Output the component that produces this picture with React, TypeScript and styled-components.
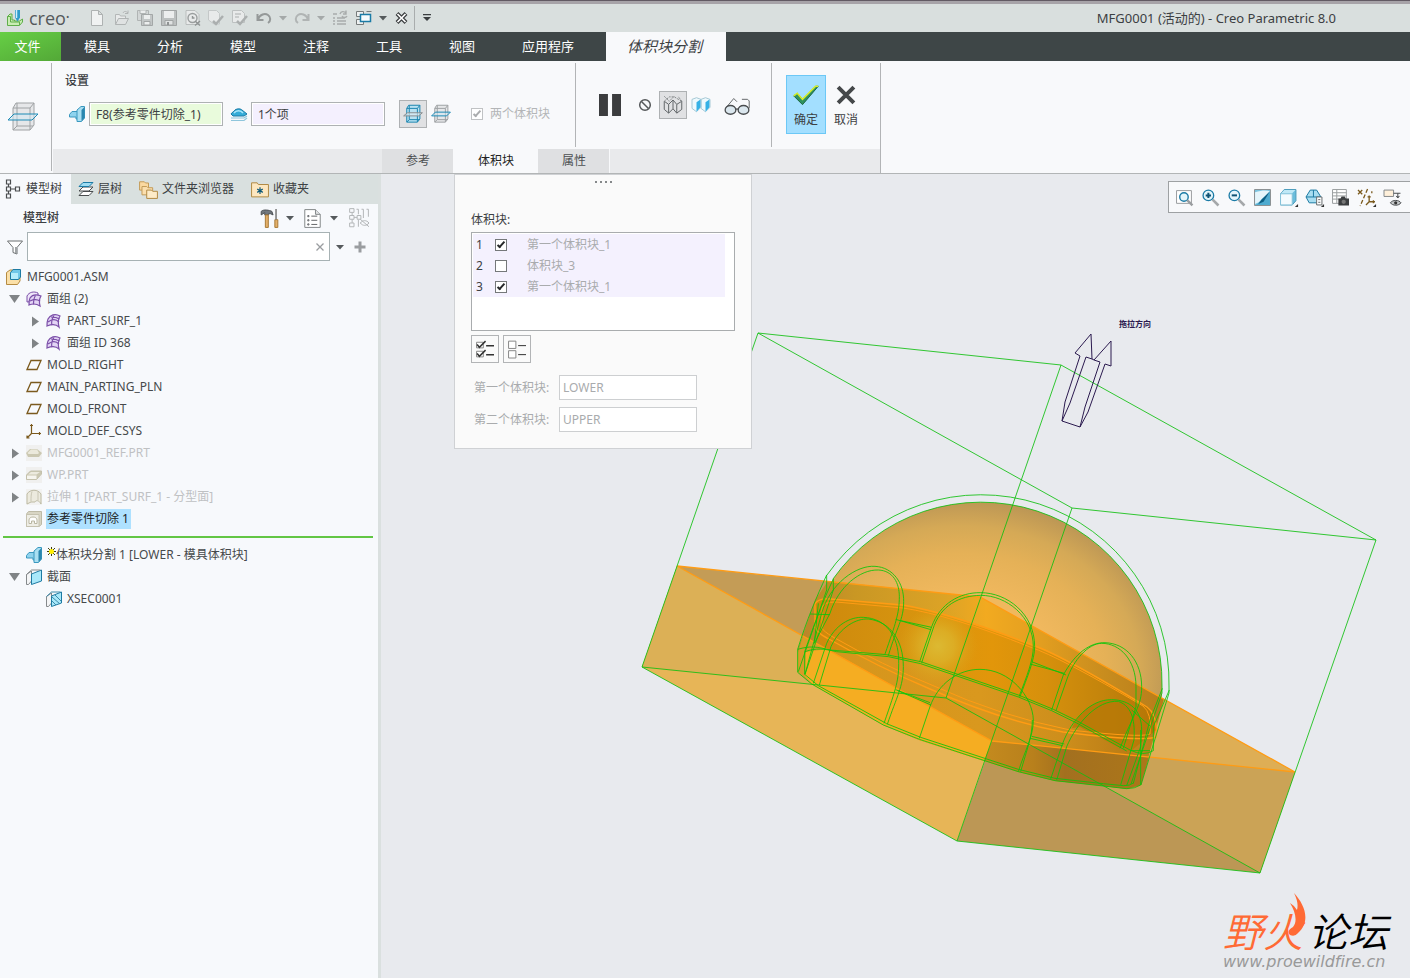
import React from "react";
import styled, { createGlobalStyle, css } from "styled-components";

const GlobalStyle = createGlobalStyle`
  *, *::before, *::after { box-sizing: border-box; }
  body {
    margin: 0;
    background: #e8eaee;
    color: #3c4043;
    font: 12px/18px "Noto Sans", "Noto Sans CJK SC", sans-serif;
  }
  button, input { font: inherit; color: inherit; }
  button { padding: 0; border: 0; background: none; }
  svg { display: block; flex: none; }
`;

/* ---------- icons ---------- */

const C = { blue: "#1b7ba6", brown: "#7b5a1d", purple: "#7b4fa8" };

const icons: Record<string, React.ReactNode> = {
  logo: (
    <>
      <path d="M.500 6.500L3 4h2v6h2.500v1h5l3-2v3l-3 3.500H.500z" fill="#c9edb4" stroke="#5fae4a" />
      <path d="M.500 6.500h3V12h9M12.500 12v3" fill="none" stroke="#5fae4a" />
      <path d="M8 0v7.500l2.500 4L13 7.500V0z" fill="#2f9ccb" />
      <path d="M9.500 0v8" stroke="#d2eefa" strokeWidth="1.500" />
    </>
  ),
  file: <path d="M2.500.500h7l4 4v11h-11zM9.500.500v4h4" fill="#f0f2f2" stroke="#aeb2b2" />,
  open: (
    <>
      <path d="M1.500 14.500V4.500h4l1 1.500h5v2.500" fill="#e8eaea" stroke="#b3b7b7" />
      <path d="M1.500 14.500l3-6h10l-3 6zM9 3c1-2 3-2 5 0M14 .500V3.500h-3" fill="#dfe2e2" stroke="#b0b4b4" />
    </>
  ),
  saveCopy: (
    <>
      <path d="M.500.500h11v10h-11z" fill="#d3d7d7" stroke="#b0b4b4" />
      <path d="M3 .500v3h6v-3" fill="#eceeee" stroke="#b0b4b4" />
      <path d="M4.500 4.500h11v11h-11z" fill="#c3c7c7" stroke="#a3a7a7" />
      <path d="M7 5h6v4H7z" fill="#eceeee" />
      <path d="M7 11.500h6V15H7z" fill="#eceeee" stroke="#a3a7a7" />
    </>
  ),
  save: (
    <>
      <path d="M.500.500h15v15H.500z" fill="#bcc0c0" stroke="#a1a5a5" />
      <path d="M3 1h10v7H3z" fill="#eceeee" />
      <path d="M4 10.500h8V15H4z" fill="#dfe2e2" stroke="#a1a5a5" />
      <path d="M6 12h2v3H6z" fill="#8f9393" />
    </>
  ),
  searchX: (
    <>
      <path d="M1 .500h9l4 4v10H1z" fill="#e8eaea" stroke="#b9bdbd" />
      <circle cx="7.500" cy="8" r="4.500" fill="none" stroke="#9a9e9e" strokeWidth="1.400" />
      <path d="M7.500 6v2h2M10 11l5 4.500M15 11l-5 4.500" stroke="#8f9393" strokeWidth="1.400" fill="none" />
    </>
  ),
  docEdit: (
    <>
      <path d="M.500.500h8l3 3V14H6L.500 10z" fill="#e8eaea" stroke="#c4c8c8" />
      <path d="M5 11l3 3 7-8" fill="none" stroke="#abafaf" strokeWidth="2.500" />
    </>
  ),
  docPen: (
    <>
      <path d="M.500.500h9l3 3v9h-12z" fill="#e8eaea" stroke="#bdc1c1" />
      <path d="M3 4h6M3 7h4" fill="none" stroke="#aaaeae" />
      <path d="M5 11l3 3 7-8" fill="none" stroke="#abafaf" strokeWidth="2.500" />
    </>
  ),
  undo: <path d="M1.500 4v6h6M2 9.500C4 4 9 3 12 5c3 2 3 6 0 8" fill="none" stroke="#959999" strokeWidth="2" />,
  redo: <path d="M14.500 4v6h-6M14 9.500C12 4 7 3 4 5c-3 2-3 6 0 8" fill="none" stroke="#b0b4b4" strokeWidth="2" />,
  regen: (
    <path d="M1 4h4M1 8h2M5 8h8M1 11h2M5 11h9M1 14h2M5 14h9M8 4c1-3 4-3 6-1M14 .500V4h-3M15 6c-1 2-4 2-5 0" fill="none" stroke="#a8acac" strokeWidth="1.400" />
  ),
  windows: (
    <>
      <path d="M.500 1.500h7v5h-7zM.500 9.500h7v5h-7zM10.500 1.500h5" fill="#eef0f0" stroke="#777b7b" />
      <path d="M4.500 4.500h10v7h-10z" fill="#f6fbfd" stroke="#1b7ba6" strokeWidth="1.500" />
    </>
  ),
  closeWin: (
    <>
      <path d="M3 3.500l9 9M12 3.500l-9 9" stroke="#3b3e40" strokeWidth="4" />
      <path d="M3.500 4l8 8M11.500 4l-8 8" stroke="#fff" strokeWidth="1.700" />
    </>
  ),
  caret: <path d="M4 6h8l-4 4.500z" fill="#555a5c" />,
  caretDim: <path d="M4 6h8l-4 4.500z" fill="#a5a9a9" />,
  more: <path d="M4 4h8v1.200H4zM4 7h8l-4 4z" fill="#3b3e40" />,
  split: (
    <>
      <path d="M4.500 1H13.500V12L11.500 14.500H3V3.500z" fill="#e6e7e9" stroke="#9fa2a4" />
      <path d="M3 3.500H11.500v11M11.500 3.500L13.500 1M5 1V12.500L3 14.500M5 12.500h8" fill="none" stroke="#9fa2a4" />
      <path d="M.500 9.500L3.500 6.500h12l-3 3z" fill="#cfe8f3" fillOpacity=".5" stroke="#1d8ab5" />
    </>
  ),
  splitBlue: (
    <>
      <path d="M4.500 1H13.500V12L11.500 14.500H3V3.500z" fill="#b9e2f2" stroke="#1d86b0" />
      <path d="M3 3.500H11.500v11M11.500 3.500L13.500 1M5 1V12.500L3 14.500M5 12.500h8" fill="none" stroke="#1d86b0" />
      <path d="M.500 9.500L3.500 7h12l-3 2.500z" fill="#e2eef3" fillOpacity=".6" stroke="#8a8e90" />
    </>
  ),
  volume: (
    <>
      <path d="M.500 8.500L3 5.500h6v7.500H7v-2H.500z" fill="#8fd3ee" stroke="#3b98bf" />
      <path d="M8 4L12 .500h3.500V12l-3 3.500H8z" fill="#a9dff2" stroke="#3b98bf" />
      <path d="M12.500 4L15.500 1v11l-3 3z" fill="#2a86ae" />
    </>
  ),
  surfaceBlue: (
    <>
      <path d="M0 8c1-2 3-2 4-4 3-2 6-1 7 0l5 4-3 2H2z" fill="#35acd8" stroke="#1b7ba6" />
      <path d="M3 7c2-3 7-3 9 0" stroke="#a9e6fa" strokeWidth="1.500" fill="none" />
      <path d="M0 12h13l3-2M0 14.500h13l3-2.500" fill="none" stroke="#8fc6dc" strokeWidth="1.200" />
    </>
  ),
  none: (
    <>
      <circle cx="8" cy="8" r="5.300" fill="none" stroke="#55585a" strokeWidth="1.500" />
      <path d="M4.500 4.500l7 7" stroke="#55585a" strokeWidth="1.500" />
    </>
  ),
  wire: (
    <>
      <path d="M1 5l3.500 2.500v7L1 11.500zM4.500 7.500L8 4v7l-3.500 3.500M8 4l3 3.500v7L8 11M11 7.500L15 5v6.500l-4 3" fill="none" stroke="#63676a" />
      <path d="M1 5l4-3.500h4L15 5M15 5l-3-4M1 1l4 4 4-4" fill="none" stroke="#85898b" strokeDasharray="2 1" />
    </>
  ),
  shaded: (
    <>
      <path d="M0 3l4-1.500L8 3v7l-4 4-4-3zM8 3l4-1.500L16 3v7l-4 4-4-3z" fill="#eef9fd" stroke="#a5c9d6" />
      <path d="M4 5.500L7.500 3v7L4 14zM12 5.500L15.500 3v7L12 14z" fill="#35b1e6" />
    </>
  ),
  glasses: (
    <>
      <path d="M1 10l5-6 2 2M11 4.500h3.500l1 1V10" fill="none" stroke="#666a6c" />
      <ellipse cx="4" cy="11" rx="3.300" ry="2.700" fill="#dbe7ee" stroke="#4a4d4f" strokeWidth="1.300" />
      <ellipse cx="12" cy="11" rx="3.300" ry="2.700" fill="#dbe7ee" stroke="#4a4d4f" strokeWidth="1.300" />
      <path d="M7 10.500h2" fill="none" stroke="#4a4d4f" strokeWidth="1.300" />
    </>
  ),
  check: (
    <>
      <path d="M1 8.500l2-1.500 3 3.500L13.500 3H15L6 13.500z" fill="#2e9160" stroke="#1f6a43" />
      <path d="M1 8.500l2-1.500 3 3.500L13.500 3H15" fill="none" stroke="#d8ee26" strokeWidth="1.500" />
    </>
  ),
  cancel: <path d="M3.500 3.500l9 9M12.500 3.500L3.500 12.500" stroke="#45484a" strokeWidth="4" />,
  pause: <path d="M0 0h6.500v16H0zM9.500 0H16v16H9.500z" fill="#3b3c3e" />,
  treeTab: (
    <path d="M.500-1h4v4h-4zM.500 6h4v4h-4zM.500 13h4v4h-4zM9.500 6h4v4h-4zM2.500 3v3M2.500 10v3M4.500 8h5" fill="none" stroke="#4a4d4f" strokeWidth="1.200" />
  ),
  layers: (
    <>
      <path d="M1 14.500l4-4h10l-4 4z" fill="#fff" stroke="#4a4d4f" />
      <path d="M1 10l4-4h10l-4 4z" fill="#fff" stroke="#4a4d4f" />
      <path d="M1 5.500l4-4h10l-4 4z" fill="#9edcf2" stroke="#1b7ba6" />
    </>
  ),
  folders: (
    <>
      <path d="M.500 1.500h4l1 1H8v6H.500z" fill="#fbd9a0" stroke="#c39b58" />
      <path d="M2.500 5.500h4l1 1h4v6h-9z" fill="#fbdfae" stroke="#c39b58" />
      <path d="M6.500 8.500h4l1 1h4v6h-9z" fill="#fdebc8" stroke="#b18a45" />
    </>
  ),
  favorites: (
    <>
      <path d="M.500 2.500h5l1 1.500h9v11H.500z" fill="#fde7c0" stroke="#b18a45" />
      <path d="M8 6.500v6M5.500 8l5 3M10.500 8l-5 3" stroke="#0d5878" strokeWidth="1.200" />
    </>
  ),
  tools: (
    <>
      <path d="M1 2c2-2 7-1 9 0l1 3-2-1H7v1H4V3L1 5z" fill="#70777d" stroke="#4d5256" />
      <path d="M4.500 5h2.500v10.500H4.500zM12.500 9h2.500v6.500h-2.500z" fill="#e3b06a" stroke="#a97a38" />
      <path d="M13.500 0v9" stroke="#777" strokeWidth="1.500" />
    </>
  ),
  settingsList: (
    <>
      <path d="M1.500.500h9l4 4v11h-13z" fill="#fff" stroke="#85898b" />
      <path d="M10.500.500v4h4" fill="#dfe1e2" stroke="#85898b" />
      <path d="M7 6h5M7 9.500h5M7 13h5M4 5.500h1v1H4zM4 9h1v1H4zM4 12.500h1v1H4z" stroke="#66696c" fill="none" />
    </>
  ),
  treeHide: (
    <path d="M.500.500h3.500v3H.500zM.500 6h3.500v3H.500zM.500 12h3.500v3H.500zM6.500 6h3v3h-3zM2.500 3.500V6M2.500 9v3M4 7.500h2.500M7.500 1v4M7.500 9.500V15M11.500 1v7M15.500 1v6M6 1h1.500M10 1h1.500M14 1h1.500M9 12c2-2.500 5-2.500 7 0-2 2.500-5 2.500-7 0M9 9l7 6" fill="none" stroke="#b4b7b9" />
  ),
  filter: (
    <>
      <path d="M.500 2h15L10 8.500V15l-4-1.500v-5z" fill="#fff" stroke="#6b6f71" />
      <path d="M8 8h2v6.500L8 14z" fill="#a0a4a6" />
    </>
  ),
  clear: <path d="M4 4l8 8M12 4l-8 8" stroke="#9a9da0" strokeWidth="1.300" />,
  plus: <path d="M8 2.500v11M2.500 8h11" stroke="#9a9da0" strokeWidth="3" />,
  asm: (
    <>
      <path d="M.500 3.500L4 1h10v11l-2.500 3.500h-11z" fill="#fbe0a8" stroke="#b58b42" />
      <path d="M4.500 3.500L7 .500h7.500V8l-2 2.500h-8z" fill="#6fc7e8" stroke="#1e7ba3" />
      <path d="M5 4h7v6H5z" fill="#b5ecfb" />
    </>
  ),
  quilt: (
    <>
      <path d="M2 6c2-4 7-6 12-3-2 3-2 7-1 11-3-3-7-3-12-1 0-3 0-5 1-7z" fill="#e3d5f5" stroke={C.purple} strokeWidth="1.200" />
      <path d="M8 2.500c-2 3-3 6-2 9.500M2 9c4-3 8-3 11 0M5 4c4 0 7 1 8.500 2" fill="none" stroke={C.purple} strokeWidth="1.200" />
    </>
  ),
  quilts: (
    <>
      <path d="M1 5C3 1 8 0 12 2v8L1 11z" fill="#efe6fa" stroke={C.purple} />
      <path d="M4 7c2-3 6-4 11-2-2 3-2 6-1 10-3-2-6-3-11-1 0-3 0-5 1-7z" fill="#e3d5f5" stroke={C.purple} strokeWidth="1.200" />
      <path d="M9.500 4.500c-2 3-2 6-2 9M4 10c4-2 7-2 10 0" fill="none" stroke={C.purple} strokeWidth="1.200" />
    </>
  ),
  plane: <path d="M1 12.500l4-9h10l-4 9z" fill="none" stroke={C.brown} strokeWidth="1.300" />,
  csys: <path d="M5.500 1v9.500H15M5.500 10.500L1 15M4 2.500h3M13.500 9v3M1 12.500V15h2.500" fill="none" stroke={C.brown} strokeWidth="1.200" />,
  partDim: (
    <>
      <path d="M0 0h16v16H0z" fill="#f0f0ef" />
      <path d="M0 8l4-4h7l5 4-3 4H2z" fill="#cbc8b2" />
      <path d="M1.500 8L5 4.500h6L13 8l-1 1H2.500z" fill="#ebe9dc" />
    </>
  ),
  boxDim: (
    <>
      <path d="M0 0h16v16H0z" fill="#f0f0ef" />
      <path d="M.500 8l4-4h11v3l-5 5.500H.500z" fill="#cbc8b2" stroke="#c4c1ac" />
      <path d="M1 8.500h9.500V12H1z" fill="#f6f5ef" />
      <path d="M2 7.500L5 5h9l-3.500 2.500z" fill="#eceade" />
    </>
  ),
  extrudeDim: (
    <>
      <path d="M0 0h16v16H0z" fill="#f2f2f1" />
      <path d="M1 5c3-5 11-5 14 0v10c-2-4-5-4-6-2H5l-4 2z" fill="#eceade" stroke="#bdbaa4" />
      <path d="M6 2.500c-1 3-1 6-1 10M12 3v8" stroke="#c9c6b4" fill="none" />
    </>
  ),
  cutDim: (
    <>
      <path d="M.500 3l2-2.500h13v13l-2.500 2H.500z" fill="#d8d5c4" stroke="#bdbaa6" />
      <path d="M.500 3.500h12.500v12H.500z" fill="#eeede5" stroke="#c5c2b0" />
      <path d="M3 12.500V9c0-4 8-4 8 0v3.500H8.500V10h-3v2.500z" fill="#fff" stroke="#b9b6a2" />
    </>
  ),
  section: (
    <>
      <path d="M.500 5.500L5.500 2v10l-3 3.500h-2z" fill="#f4f5f6" stroke="#85898b" />
      <path d="M5.500 5l10-4v11l-10 3.500z" fill="#a9e8fa" stroke="#1e7ba3" />
      <path d="M.500 5.500L5.500 1h9" fill="none" stroke="#85898b" />
    </>
  ),
  xsec: (
    <>
      <path d="M.500 5.500L5.500 2v10l-3 3.500h-2z" fill="#f4f5f6" stroke="#85898b" />
      <path d="M5.500 5l10-4v11l-10 3.500z" fill="#a9e8fa" stroke="#1e7ba3" />
      <path d="M6 6l8 7M6 10l4 4M9 4l6 6M.500 5.500L5.500 1h9" fill="none" stroke="#3a8bab" />
    </>
  ),
  zoomFit: (
    <>
      <path d="M.500 1.500h14v12H.500z" fill="#fff" stroke="#9a9da0" />
      <circle cx="7.500" cy="7.500" r="4" fill="#e4f5fb" stroke={C.blue} strokeWidth="1.400" />
      <path d="M10.500 10.500l5 5" stroke="#9a9da0" strokeWidth="2.400" />
    </>
  ),
  zoomIn: (
    <>
      <path d="M10 10l5.500 5.500" stroke="#a5a8aa" strokeWidth="2.600" />
      <circle cx="6" cy="6" r="5" fill="#e4f5fb" stroke={C.blue} strokeWidth="1.300" />
      <path d="M3.500 6h5M6 3.500v5" stroke="#0e5375" strokeWidth="2" />
    </>
  ),
  zoomOut: (
    <>
      <path d="M10 10l5.500 5.500" stroke="#a5a8aa" strokeWidth="2.600" />
      <circle cx="6" cy="6" r="5" fill="#e4f5fb" stroke={C.blue} strokeWidth="1.300" />
      <path d="M3.500 6h5" stroke="#0e5375" strokeWidth="2" />
    </>
  ),
  repaint: (
    <>
      <path d="M.500.500h15v15H.500z" fill="#7cc5e0" stroke="#8b8f91" />
      <path d="M1 3C7 1 12 1 15 2L8 9c-2 2-3 4-7 5z" fill="#e6f5fb" />
      <path d="M1 15c4-1 5-4 7-6s5-3 7-7v13z" fill="#4fabd0" />
      <path d="M4 14l3-4 8-8-6 10z" fill="#0d5f84" />
    </>
  ),
  display: (
    <>
      <path d="M.500 4.500L4 .500h11V11l-3.500 4H.500z" fill="#6bbddc" stroke="#4b9bbb" />
      <path d="M.500 4.500h11V15H.500z" fill="#f4fbfe" stroke="#86c2d9" />
      <path d="M1 4l3-3h10.500l-3 3z" fill="#bfe8f6" />
      <path d="M17 14v3h-3z" fill="#333" />
    </>
  ),
  views: (
    <>
      <path d="M0 7.500L4 1h6l4 6.500-3 5.500H3z" fill="#a9def1" stroke="#1e7ba3" />
      <path d="M0 7.500h14M7 1v6.500" stroke="#1e7ba3" />
      <path d="M10 7.500h5V15h-5z" fill="#fff" stroke="#6a6e70" />
      <path d="M11.500 10h2M11.500 12.500h2" stroke="#6a6e70" />
      <path d="M17 14v3h-3z" fill="#333" />
    </>
  ),
  camera: (
    <>
      <path d="M.500.500h13v13H.500zM.500 3.500h13M.500 6.500h13M.500 9.500h13M4.500.500v13" fill="#fff" stroke="#9b9fa1" />
      <path d="M6 9h2l1-2h3l1 2h3v6.500H6z" fill="#3c3e40" />
      <circle cx="11" cy="12" r="2" fill="#777" />
    </>
  ),
  datum: (
    <>
      <path d="M0 1l4 4M4 1L0 5" stroke={C.brown} strokeWidth="1.300" />
      <path d="M9 0L2 16M13 4v-2" stroke={C.brown} strokeWidth="1.300" strokeDasharray="4 2" />
      <path d="M10.500 6v6H16M10.500 12l-3 3M9 7.500h3M14.500 10.500v3" stroke={C.brown} strokeWidth="1.300" />
      <path d="M17 14v3h-3z" fill="#333" />
    </>
  ),
  annot: (
    <>
      <path d="M0 1h9v6H0z" fill="#fff0da" stroke="#85898b" />
      <path d="M9 4h6.500M13 4v4M11.500 6.500L13 8.500l1.500-2M6 13c2-3 8-3 10 0-2 3-8 3-10 0z" fill="#c4c7c9" stroke="#4a4d4f" />
      <circle cx="11" cy="13" r="1.500" fill="#333" />
    </>
  ),
  checkAll: (
    <>
      <path d="M.500 2h6v5h-6zM.500 10h6v5h-6z" fill="#fff" stroke="#888" />
      <path d="M1 4l2 2.500L8.500 1M1 12l2 2.500L8.500 9M9 5h7M9 13h7" fill="none" stroke="#333" strokeWidth="1.500" />
    </>
  ),
  uncheckAll: (
    <>
      <path d="M.500 1h6.500v6.500H.500zM.500 9.500h6.500V16H.500z" fill="#fff" stroke="#888" />
      <path d="M9 5h7M9 13h7" stroke="#333" />
    </>
  ),
  expanded: <path d="M2 4h11l-5.500 8z" fill="#808486" />,
  collapsed: <path d="M5 3.500l7 5-7 5z" fill="#808486" />,
};

const Glyph = styled.svg`
  overflow: visible;
  path, circle, ellipse { vector-effect: non-scaling-stroke; }
`;

function Icon({ name, size = 16 }: { name: string; size?: number }) {
  return (
    <Glyph width={size} height={size} viewBox="0 0 16 16" fill="none" aria-hidden="true">
      {icons[name]}
    </Glyph>
  );
}

/* ---------- frame ---------- */

const Page = styled.div`
  min-height: 100vh;
  display: flex;
  flex-direction: column;
`;

const TitleBar = styled.header`
  display: flex;
  align-items: center;
  height: 32px;
  padding: 3px 74px 0 7px;
  background: #d9dfde;
  border-top: 1px solid #625a63;
  box-shadow: inset 0 3px 0 #a7a3a8;
`;

const Brand = styled.span`
  width: 55px;
  margin-left: 6px;
  font: 18px/24px "Open Sans", sans-serif;
  color: #55595b;
  sup { font-size: 9px; line-height: 9px; vertical-align: 5px; }
`;

const QuickButton = styled.button<{ $w?: number }>`
  display: flex;
  justify-content: center;
  width: ${(p) => p.$w ?? 24}px;
`;

const Rule = styled.span`
  width: 1px;
  height: 24px;
  background: #a9adad;
`;

const WindowTitle = styled.span`
  margin-left: auto;
  font-size: 13px;
`;

const MenuBar = styled.nav`
  display: flex;
  gap: 1px;
  height: 29px;
  background: #3e4647;
  color: #fff;
`;

const MenuTab = styled.button<{ $kind?: "file" | "active" }>`
  padding: 0 23px 1px;
  font-size: 13px;
  ${(p) => p.$kind === "file" && css`
    width: 61px;
    margin-right: -1px;
    padding: 0 6px 1px 0;
    background: linear-gradient(160deg, #66cf45, #53a837);
  `}
  ${(p) => p.$kind === "active" && css`
    margin-left: 8px;
    padding: 0 24px 1px 21px;
    background: #f8f9fb;
    color: #3c4043;
    font-size: 15px;
    font-style: italic;
  `}
`;

/* ---------- ribbon ---------- */

const Ribbon = styled.section`
  display: flex;
  height: 113px;
  background: #f8f9fb;
  border-bottom: 1px solid #b2b5b6;
`;

const RibbonIcon = styled.div`
  width: 52px;
  margin: 2px 0;
  display: flex;
  align-items: center;
  padding-left: 7px;
  border-right: 1px solid #b2b4b6;
`;

const RibbonBody = styled.div`
  display: flex;
  flex-direction: column;
  margin: 2px 0 0;
  border-right: 1px solid #b2b4b6;
`;

const Groups = styled.div`
  display: flex;
  height: 84px;
  margin-bottom: 2px;
`;

const Group = styled.div<{ $w: number }>`
  width: ${(p) => p.$w}px;
  border-right: 1px solid #b2b4b6;
  &:last-child { border-right: 0; }
`;

const GroupTitle = styled.h2`
  margin: 9px 0 10px 13px;
  font-size: 12px;
  line-height: 18px;
  font-weight: 500;
`;

const Controls = styled.div`
  display: flex;
  align-items: center;
  height: 28px;
  padding-left: 17px;
`;

const Collector = styled.input<{ $bg: string; $last?: boolean }>`
  width: 134px;
  height: 24px;
  margin: 0 ${(p) => (p.$last ? 14 : 8)}px 0 4px;
  padding: 0 6px 1px;
  border: 1px solid #aeb2b3;
  box-shadow: inset 0 0 0 1px #fff;
  background: ${(p) => p.$bg};
`;

const Toggle = styled.button<{ $on?: boolean; $w?: number }>`
  display: flex;
  align-items: center;
  justify-content: center;
  width: ${(p) => p.$w ?? 28}px;
  height: 28px;
  border: 1px solid ${(p) => (p.$on ? "#aeb1b3" : "transparent")};
  background: ${(p) => (p.$on ? "#e0e1e3" : "none")};
`;

const CheckLabel = styled.label`
  display: flex;
  align-items: center;
  gap: 7px;
  margin-left: 16px;
  color: #b3b5b7;
`;

const Tick = styled.input`
  appearance: none;
  display: block;
  width: 12px;
  height: 12px;
  margin: 0;
  border: 1px solid #75787a;
  background: #fff;
  color: #26282a;
  &:disabled { border-color: #c0c2c4; color: #aaacae; }
  &:checked::after {
    content: "";
    display: block;
    width: 4px;
    height: 8px;
    margin: 0 0 0 3px;
    border: solid currentColor;
    border-width: 0 2px 2px 0;
    transform: rotate(42deg);
  }
`;

const Playback = styled.div`
  display: flex;
  align-items: center;
  height: 28px;
  margin-top: 28px;
  padding-left: 13px;
`;

const Confirm = styled.div`
  display: flex;
  padding: 12px 14px;
`;

const BigButton = styled.button<{ $on?: boolean }>`
  display: flex;
  flex-direction: column;
  align-items: center;
  gap: 2px;
  width: 40px;
  height: 59px;
  padding: 0 0 4px;
  justify-content: flex-end;
  border: 1px solid ${(p) => (p.$on ? "#6cc8f6" : "transparent")};
  background: ${(p) => (p.$on ? "#a3dfff" : "none")};
`;

const SubTabs = styled.div`
  display: flex;
  flex: 1;
  padding-left: 329px;
  margin-left: 1px;
  background: #e9eaec;
`;

const SubTab = styled.button<{ $active?: boolean }>`
  padding: 0 24px;
  background: ${(p) => (p.$active ? "#f8f9fb" : "#dfe0e2")};
  color: ${(p) => (p.$active ? "#222" : "#4c4f51")};
  box-shadow: inset -1px 0 0 #f8f9fb;
`;

/* ---------- sidebar ---------- */

const Work = styled.main`
  flex: 1;
  display: flex;
`;

const Sidebar = styled.aside`
  flex: none;
  width: 381px;
  background: #f7f9fc;
  border-right: 3px solid #dae0df;
`;

const SideTabs = styled.div`
  display: flex;
  height: 30px;
  background: #d9e0df;
`;

const SideTab = styled.button<{ $active?: boolean }>`
  display: flex;
  align-items: center;
  gap: 4px;
  padding: 0 9px 0 ${(p) => (p.$active ? 6 : 7)}px;
  background: ${(p) => (p.$active ? "#f7f9fc" : "none")};
  & + & { margin-right: 1px; }
`;

const TreeHead = styled.div`
  display: flex;
  align-items: center;
  height: 28px;
  padding: 0 5px 0 23px;
`;

const TreeTitle = styled.h2`
  flex: 1;
  margin: 0;
  font-size: 12px;
  line-height: 18px;
  font-weight: 500;
`;

const ToolButton = styled.button<{ $w?: number }>`
  display: flex;
  align-items: center;
  justify-content: center;
  width: ${(p) => p.$w ?? 20}px;
`;

const SearchRow = styled.div`
  display: flex;
  align-items: center;
  padding: 0 7px;
`;

const SearchBox = styled.div`
  display: flex;
  align-items: center;
  width: 303px;
  height: 29px;
  margin-left: 4px;
  padding: 0 1px 0 4px;
  border: 1px solid #a7b2b4;
  background: #fff;
  input { flex: 1; min-width: 0; border: 0; outline: 0; background: none; }
`;

const Tree = styled.ul`
  list-style: none;
  margin: 0;
  padding: 5px 0 0;
`;

const Node = styled.li<{ $level: number; $dim?: boolean }>`
  display: flex;
  align-items: center;
  height: 22px;
  padding-left: ${(p) => (p.$level ? p.$level * 20 - 14 : 6)}px;
  color: ${(p) => (p.$dim ? "#bfc1c3" : "#46494b")};
`;

const Twisty = styled.span`
  width: 20px;
  padding-left: 1px;
`;

const NodeName = styled.span<{ $selected?: boolean }>`
  margin-left: 4px;
  padding: 1px 2px 1px 1px;
  line-height: 18px;
  ${(p) => p.$selected && css`background: #aee1ff; color: #202325;`}
`;

const Burst = styled.svg`
  display: inline-block;
  vertical-align: 3px;
`;

const InsertHere = styled.li`
  height: 2px;
  margin: 6px 5px 6px 3px;
  background: #62c644;
`;

/* ---------- canvas ---------- */

const Canvas = styled.section`
  position: relative;
  flex: 1;
  min-width: 0;
  background: #e8eaee;
`;

const Scene = styled.svg`
  position: absolute;
  inset: 0;
  width: 100%;
  height: 100%;
`;

const ViewBar = styled.div`
  position: absolute;
  top: 7px;
  right: 0;
  display: flex;
  height: 32px;
  padding: 0 5px 0 2px;
  border: 1px solid #9ea1a3;
  border-right: 0;
  background: #f8f9fb;
`;

const Panel = styled.section`
  position: absolute;
  top: 0;
  left: 73px;
  width: 298px;
  padding: 0 16px 16px;
  background: #fafafa;
  border: 1px solid #cfd1d4;
`;

const Grip = styled.div`
  display: flex;
  justify-content: center;
  gap: 3px;
  padding-top: 6px;
  height: 36px;
  span { width: 2px; height: 2px; background: #85888a; }
`;

const PanelTitle = styled.h3`
  margin: 0 0 3px;
  font-size: 12px;
  line-height: 18px;
  font-weight: 400;
`;

const ListBox = styled.div`
  height: 99px;
  padding: 1px 9px 0 1px;
  border: 1px solid #a9acae;
  background: #fff;
`;

const VolumeTable = styled.table`
  width: 100%;
  border-collapse: collapse;
  background: #f4f1fe;
  td { height: 21px; padding: 0; }
  td:nth-child(1) { width: 22px; padding-left: 3px; }
  td:nth-child(2) { width: 32px; }
  td:nth-child(3) { color: #a9abad; }
`;

const BulkRow = styled.div`
  display: flex;
  gap: 4px;
  margin: 4px 0 12px;
`;

const BulkButton = styled(Toggle)`
  border-color: #b2b4b6;
`;

const Field = styled.label`
  display: flex;
  align-items: center;
  margin: 0 0 7px 3px;
  color: #a9abad;
  span { width: 85px; }
  input {
    width: 138px;
    height: 25px;
    padding: 0 3px;
    border: 1px solid #cdcfd1;
    background: #fff;
    color: #a9abad;
  }
  &:last-child { margin-bottom: 0; }
`;

const Watermark = styled.a`
  position: absolute;
  right: 22px;
  bottom: 6px;
  text-decoration: none;
  color: #000;
`;

const WatermarkName = styled.span`
  position: relative;
  display: flex;
  gap: 5px;
  font: italic 350 40px/44px "Noto Sans CJK SC", sans-serif;
  em { color: #ff6a35; }
  svg { position: absolute; left: 62px; top: -15px; }
`;

const WatermarkUrl = styled.span`
  display: block;
  font: italic 16px/20px "DejaVu Sans", sans-serif;
  font-variant-ligatures: none;
  color: #999;
`;

/* ---------- data ---------- */

const menus = ["模具", "分析", "模型", "注释", "工具", "视图", "应用程序"];

const quick: [string, string, number?][] = [
  ["file", "新建", 26], ["open", "打开", 23], ["saveCopy", "保存副本"], ["save", "保存"],
  ["searchX", "拭除", 23], ["docEdit", "检入"], ["docPen", "检出"], ["undo", "撤消"],
  ["caretDim", "撤消列表", 13], ["redo", "重做", 25], ["caretDim", "重做列表", 13],
  ["regen", "重新生成", 25], ["windows", "窗口"], ["caret", "窗口列表", 13], ["closeWin", "关闭", 25],
];

type TreeItem = { level: number; icon: string; name: string; open?: boolean; dim?: boolean; selected?: boolean; isNew?: boolean };

const treeBefore: TreeItem[] = [
  { level: 0, icon: "asm", name: "MFG0001.ASM" },
  { level: 1, icon: "quilts", name: "面组 (2)", open: true },
  { level: 2, icon: "quilt", name: "PART_SURF_1", open: false },
  { level: 2, icon: "quilt", name: "面组 ID 368", open: false },
  { level: 1, icon: "plane", name: "MOLD_RIGHT" },
  { level: 1, icon: "plane", name: "MAIN_PARTING_PLN" },
  { level: 1, icon: "plane", name: "MOLD_FRONT" },
  { level: 1, icon: "csys", name: "MOLD_DEF_CSYS" },
  { level: 1, icon: "partDim", name: "MFG0001_REF.PRT", open: false, dim: true },
  { level: 1, icon: "boxDim", name: "WP.PRT", open: false, dim: true },
  { level: 1, icon: "extrudeDim", name: "拉伸 1 [PART_SURF_1 - 分型面]", open: false, dim: true },
  { level: 1, icon: "cutDim", name: "参考零件切除 1", selected: true },
];

const treeAfter: TreeItem[] = [
  { level: 1, icon: "volume", name: "体积块分割 1 [LOWER - 模具体积块]", isNew: true },
  { level: 1, icon: "section", name: "截面", open: true },
  { level: 2, icon: "xsec", name: "XSEC0001" },
];

const volumes = [
  { name: "第一个体积块_1", on: true },
  { name: "体积块_3", on: false },
  { name: "第一个体积块_1", on: true },
];

const viewTools: [string, string][] = [
  ["zoomFit", "重新调整"], ["zoomIn", "放大"], ["zoomOut", "缩小"], ["repaint", "重画"], ["display", "显示样式"],
  ["views", "已保存方向"], ["camera", "视图管理器"], ["datum", "基准显示过滤器"], ["annot", "注释显示"],
];

function TreeNode({ item }: { item: TreeItem }) {
  return (
    <Node $level={item.level} $dim={item.dim}>
      {item.level > 0 && (
        <Twisty>{item.open !== undefined && <Icon name={item.open ? "expanded" : "collapsed"} />}</Twisty>
      )}
      <Icon name={item.icon} />
      <NodeName $selected={item.selected}>
        {item.isNew && (
          <Burst width="9" height="9" viewBox="0 0 9 9">
            <path d="M4.500 0v9M0 4.500h9M1 1l7 7M8 1L1 8" stroke="#3d3d10" />
            <circle cx="4.500" cy="4.500" r="2.500" fill="#ffee00" />
          </Burst>
        )}
        {item.name}
      </NodeName>
    </Node>
  );
}

/* ---------- 3D model ---------- */

const bodyOutline =
  "M828 581L980 597L1164 699L1141 785L1127 789L1103 786L1055 781L1018 772L984 761L919 740L883 725L812 684L798 672V649L815 600Z";

function Model() {
  return (
    <Scene viewBox="381 174 1029 804" preserveAspectRatio="xMinYMin meet" role="img" aria-label="模具体积块分割预览">
      <defs>
        <radialGradient id="dome" gradientUnits="userSpaceOnUse" cx="0" cy="0" r="1" gradientTransform="translate(962 672) scale(212 174)">
          <stop offset=".45" stopColor="#f0b85e" />
          <stop offset=".68" stopColor="#e5b157" />
          <stop offset=".84" stopColor="#d5a956" />
          <stop offset="1" stopColor="#ba9555" />
        </radialGradient>
        <linearGradient id="plane" gradientUnits="userSpaceOnUse" x1="800" y1="0" x2="1165" y2="0">
          <stop offset="0" stopColor="#b9842a" />
          <stop offset=".15" stopColor="#c99724" />
          <stop offset=".4" stopColor="#dca326" />
          <stop offset=".51" stopColor="#f2aa20" />
          <stop offset=".66" stopColor="#e29e20" />
          <stop offset=".85" stopColor="#c68b1e" />
          <stop offset="1" stopColor="#b77c1a" />
        </linearGradient>
        <linearGradient id="inner" gradientUnits="userSpaceOnUse" x1="815" y1="0" x2="1155" y2="0">
          <stop offset="0" stopColor="#ce890c" />
          <stop offset=".25" stopColor="#d5930f" />
          <stop offset=".52" stopColor="#e2960a" />
          <stop offset=".68" stopColor="#d6900c" />
          <stop offset=".85" stopColor="#c3840c" />
          <stop offset="1" stopColor="#b47506" />
        </linearGradient>
        <linearGradient id="base" gradientUnits="userSpaceOnUse" x1="810" y1="0" x2="1150" y2="0">
          <stop offset="0" stopColor="#d5951c" />
          <stop offset=".5" stopColor="#d9981e" />
          <stop offset=".75" stopColor="#cd8e1c" />
          <stop offset="1" stopColor="#b37614" />
        </linearGradient>
        <linearGradient id="front" gradientUnits="userSpaceOnUse" x1="985" y1="0" x2="1145" y2="0">
          <stop offset="0" stopColor="#c48a1e" />
          <stop offset=".3" stopColor="#b8801c" />
          <stop offset=".5" stopColor="#a3701f" />
          <stop offset="1" stopColor="#ac761a" />
        </linearGradient>
        <radialGradient id="glow">
          <stop offset="0" stopColor="#dcb932" />
          <stop offset=".4" stopColor="#dcb32a" stopOpacity=".8" />
          <stop offset="1" stopColor="#dca31a" stopOpacity="0" />
        </radialGradient>
      </defs>

      {/* lower mold block */}
      <path d="M677 566L980 597L946 698L642 667Z" fill="#c49c56" />
      <path d="M980 597L1295 772L1260 873L946 698Z" fill="#deae55" />
      <path d="M677 566L992 741L957 841L642 667Z" fill="#e7b557" />
      <path d="M677 566L992 741L946 698L642 667Z" fill="#dcb056" />
      <path d="M992 741L1295 772L1260 873L957 841Z" fill="#bc9755" />
      <path d="M1030 745L1295 772L1260 873Z" fill="#cba356" />

      {/* dome and cavity */}
      <path d="M833 579A181 181 0 0 1 1162 686L1162 699L980 640L826 600Z" fill="url(#dome)" />
      <path d={bodyOutline} fill="url(#plane)" />
      <path
        d="M815 604Q818 598 830 599L903 606Q950 614 1030 645Q1060 655 1147 707Q1157 716 1156 730L1130 752L1053 710L1018 697L953 675L887 656L827 649Q812 640 815 625Z"
        fill="url(#inner)"
      />
      <path d="M805 652L827 649L887 656L953 675L1018 697L1053 710L1130 752L1143 757L992 741Z" fill="url(#base)" />
      <path d="M798 652L803 636L830 651L992 741L984 761L919 740L883 725L812 684L798 672Z" fill="#d99c28" />
      <path d="M806 652L827 649L992 741L984 761L919 740L883 725L812 684L805 676Z" fill="#f5ad22" />
      <path d="M992 741L1149 757L1141 785L1127 789L1103 786L1055 781L1018 772L984 761Z" fill="url(#front)" />
      <path d="M1072 728C1084 700 1110 698 1122 701C1134 708 1138 720 1134 734L1120 748L1080 727Z" fill="#b67806" opacity=".8" />
      <circle cx="938" cy="646" r="40" fill="url(#glow)" />

      {/* orange section edges */}
      <g fill="none" stroke="#ff9c14">
        <path d="M677 566L980 597L1295 772L992 741Z" strokeWidth="1.300" />
        <path d="M815 627V604Q818 598 830 599L903 605Q950 613 1030 644Q1060 654 1147 707Q1158 715 1156 737Q1142 742 1063 732Q1000 720 930 689Q880 668 827 638Q817 633 815 627Z" strokeWidth="1.400" />
        <path d="M822 628V607Q824 602 836 602L903 608Q950 615 1030 647Q1060 657 1143 706Q1152 713 1150 734Q1142 738 1070 730Q1000 716 934 686Q882 665 833 637Q823 631 822 628Z" />
      </g>

      {/* workpiece wireframe */}
      <g fill="none" stroke="#10c010" strokeOpacity=".85">
        <path d="M758 333L1061 365L1376 540L1072 508ZM758 333L642 667L946 698L1260 873L957 841L642 667M1061 365L946 698M1072 508L957 841M1376 540L1260 873" />
        <path d="M827 575A188 188 0 0 1 1169 687V693L1141 785" />
        <path d="M833 579A181 181 0 0 1 1162 686V693L1131 784" />
      </g>

      {/* reference part wireframe, drawn at three times scale */}
      <g transform="translate(630 480) scale(.333333)" fill="none" stroke="#0cc40a" strokeOpacity=".85" strokeWidth="3">
        <path d="M590 285C560 350 530 420 503 508V577L545 612L760 735L868 778L1165 875L1275 902L1420 918L1490 926Q1515 926 1532 915" />
        <path d="M610 297C580 360 550 440 524 515V583L565 617L770 731L872 772L1165 868L1275 895L1420 911L1480 917Q1500 918 1512 908" />
        <path d="M503 508C540 497 560 500 600 510L770 524L872 545L1165 645L1270 688L1340 722L1500 810Q1540 830 1570 812" />
        <path d="M525 515C560 503 580 506 620 515L775 530L872 551L1165 651L1265 692L1340 729L1490 813" />
        <path d="M590 285V330L505 575M610 297V330L525 583" />
        <path d="M525 583L575 400C600 310 680 255 735 259C790 262 822 310 821 365C821 420 800 440 775 527" />
        <path d="M553 490L600 400C625 320 690 268 745 270C790 272 808 310 808 350C808 400 797 430 765 522" />
        <path d="M550 610L590 490C615 435 660 410 700 412C770 415 805 470 806 540C807 600 800 620 762 730" />
        <path d="M568 615L603 500C630 440 680 415 715 417C780 425 820 480 820 560C820 620 800 650 772 733" />
        <path d="M875 548L908 450C930 375 990 347 1052 346C1130 346 1210 410 1210 500C1210 540 1190 590 1167 650" />
        <path d="M869 545L905 440C930 370 990 337 1052 338C1130 338 1214 400 1214 500C1214 540 1192 590 1170 650" />
        <path d="M868 775L900 680C925 610 985 568 1050 568C1140 568 1208 650 1210 720C1210 770 1185 810 1165 875" />
        <path d="M1207 720C1207 770 1190 810 1172 875" />
        <path d="M1265 690L1300 585C1335 520 1380 487 1425 488C1490 490 1535 545 1535 620C1535 680 1510 700 1470 805" />
        <path d="M1278 692L1310 600C1330 540 1375 490 1415 490C1470 490 1518 540 1518 620V680L1480 805" />
        <path d="M1262 897L1298 790C1325 720 1380 658 1445 659C1500 660 1535 690 1535 750L1532 800L1490 917" />
        <path d="M1280 900L1310 800C1340 730 1400 660 1465 664C1510 680 1515 730 1512 780L1472 915" />
        <path d="M812 422L905 442M797 418L903 449M803 632L903 675M797 629L900 668M1205 545L1308 585M1200 552L1303 580M1205 769L1303 792M1200 775L1298 797" />
        <path d="M540 402L600 404M553 490L565 370M1505 690L1560 738M1597 625L1560 720L1510 910M1618 630L1570 740L1570 812M1500 812L1560 812M1532 915V750" />
      </g>

      {/* pull direction arrows */}
      <g fill="none" stroke="#2b1a4f">
        <path d="M1062 421L1065 402L1080 356L1075 353L1091 334L1092 359L1086 357L1070 403L1062 421L1080 427L1085 407L1100 362L1094 360L1111 341V366L1105 364L1088 412L1080 427M1092 359L1094 360" />
      </g>
      <text x="1119" y="327" fontSize="8" fontWeight="700" fill="#2b1a4f" fontFamily="'Noto Sans CJK SC', sans-serif">拖拉方向</text>
    </Scene>
  );
}

export default function App() {
  return (
    <Page>
      <GlobalStyle />
      <TitleBar>
        <Icon name="logo" />
        <Brand>creo<sup>•</sup></Brand>
        {quick.map(([icon, label, w]) => (
          <QuickButton key={label} aria-label={label} $w={w}><Icon name={icon} /></QuickButton>
        ))}
        <Rule />
        <QuickButton aria-label="自定义快速访问工具栏"><Icon name="more" /></QuickButton>
        <WindowTitle>MFG0001 (活动的) - Creo Parametric 8.0</WindowTitle>
      </TitleBar>

      <MenuBar>
        <MenuTab $kind="file">文件</MenuTab>
        {menus.map((m) => <MenuTab key={m}>{m}</MenuTab>)}
        <MenuTab $kind="active">体积块分割</MenuTab>
      </MenuBar>

      <Ribbon>
        <RibbonIcon><Icon name="split" size={32} /></RibbonIcon>
        <RibbonBody>
          <Groups>
            <Group $w={524}>
              <GroupTitle>设置</GroupTitle>
              <Controls>
                <Icon name="volume" />
                <Collector $bg="#e9fbdc" aria-label="参考零件" defaultValue="F8(参考零件切除_1)" />
                <Icon name="surfaceBlue" />
                <Collector $last $bg="#f4f0fe" aria-label="分割曲面" defaultValue="1个项" />
                <Toggle $on aria-label="分割体积块"><Icon name="splitBlue" size={20} /></Toggle>
                <Toggle aria-label="保留体积块"><Icon name="split" size={20} /></Toggle>
                <CheckLabel><Tick type="checkbox" defaultChecked disabled />两个体积块</CheckLabel>
              </Controls>
            </Group>
            <Group $w={196}>
              <Playback>
                <Toggle $w={42} aria-label="暂停"><Icon name="pause" size={22} /></Toggle>
                <Toggle aria-label="无预览"><Icon name="none" /></Toggle>
                <Toggle $on aria-label="线框预览"><Icon name="wire" size={20} /></Toggle>
                <Toggle aria-label="着色预览"><Icon name="shaded" size={18} /></Toggle>
                <Toggle $w={44} aria-label="检查"><Icon name="glasses" size={26} /></Toggle>
              </Playback>
            </Group>
            <Group $w={108}>
              <Confirm>
                <BigButton $on><Icon name="check" size={28} />确定</BigButton>
                <BigButton><Icon name="cancel" size={28} />取消</BigButton>
              </Confirm>
            </Group>
          </Groups>
          <SubTabs>
            <SubTab>参考</SubTab>
            <SubTab $active>体积块</SubTab>
            <SubTab>属性</SubTab>
          </SubTabs>
        </RibbonBody>
      </Ribbon>

      <Work>
        <Sidebar>
          <SideTabs>
            <SideTab $active><Icon name="treeTab" /><span>模型树</span></SideTab>
            <SideTab><Icon name="layers" />层树</SideTab>
            <SideTab><Icon name="folders" size={19} />文件夹浏览器</SideTab>
            <SideTab><Icon name="favorites" size={18} />收藏夹</SideTab>
          </SideTabs>
          <TreeHead>
            <TreeTitle>模型树</TreeTitle>
            <ToolButton aria-label="设置"><Icon name="tools" size={19} /></ToolButton>
            <ToolButton aria-label="设置列表" $w={22}><Icon name="caret" /></ToolButton>
            <ToolButton aria-label="显示" $w={22}><Icon name="settingsList" size={19} /></ToolButton>
            <ToolButton aria-label="显示列表" $w={22}><Icon name="caret" /></ToolButton>
            <ToolButton aria-label="隐藏列" $w={28}><Icon name="treeHide" size={20} /></ToolButton>
          </TreeHead>
          <SearchRow>
            <Icon name="filter" />
            <SearchBox>
              <input type="text" aria-label="搜索模型树" />
              <ToolButton aria-label="清除" $w={16}><Icon name="clear" size={14} /></ToolButton>
            </SearchBox>
            <ToolButton aria-label="搜索选项"><Icon name="caret" /></ToolButton>
            <ToolButton aria-label="添加"><Icon name="plus" /></ToolButton>
          </SearchRow>
          <Tree>
            {treeBefore.map((item) => <TreeNode key={item.name} item={item} />)}
            <InsertHere />
            {treeAfter.map((item) => <TreeNode key={item.name} item={item} />)}
          </Tree>
        </Sidebar>

        <Canvas>
          <Model />
          <ViewBar>
            {viewTools.map(([icon, label]) => (
              <ToolButton key={icon} aria-label={label} $w={26}><Icon name={icon} size={17} /></ToolButton>
            ))}
          </ViewBar>
          <Panel>
            <Grip><span /><span /><span /><span /></Grip>
            <PanelTitle>体积块:</PanelTitle>
            <ListBox>
              <VolumeTable>
                <tbody>
                  {volumes.map((v, i) => (
                    <tr key={i}>
                      <td>{i + 1}</td>
                      <td><Tick type="checkbox" defaultChecked={v.on} aria-label={v.name} /></td>
                      <td>{v.name}</td>
                    </tr>
                  ))}
                </tbody>
              </VolumeTable>
            </ListBox>
            <BulkRow>
              <BulkButton aria-label="全选"><Icon name="checkAll" size={18} /></BulkButton>
              <BulkButton aria-label="全不选"><Icon name="uncheckAll" size={18} /></BulkButton>
            </BulkRow>
            <Field><span>第一个体积块:</span><input defaultValue="LOWER" disabled /></Field>
            <Field><span>第二个体积块:</span><input defaultValue="UPPER" disabled /></Field>
          </Panel>
          <Watermark href="#">
            <WatermarkName>
              <em>野火</em>
              <svg width="22" height="46" viewBox="0 0 22 46">
                <path d="M9 0C20 12 26 28 13 40Q10 44 5 42Q1 38 8 34C13 28 10 18 5 10Q10 13 12 17Q14 10 9 0Z" fill="#ff6a35" />
              </svg>
              论坛
            </WatermarkName>
            <WatermarkUrl>www.proewildfire.cn</WatermarkUrl>
          </Watermark>
        </Canvas>
      </Work>
    </Page>
  );
}
